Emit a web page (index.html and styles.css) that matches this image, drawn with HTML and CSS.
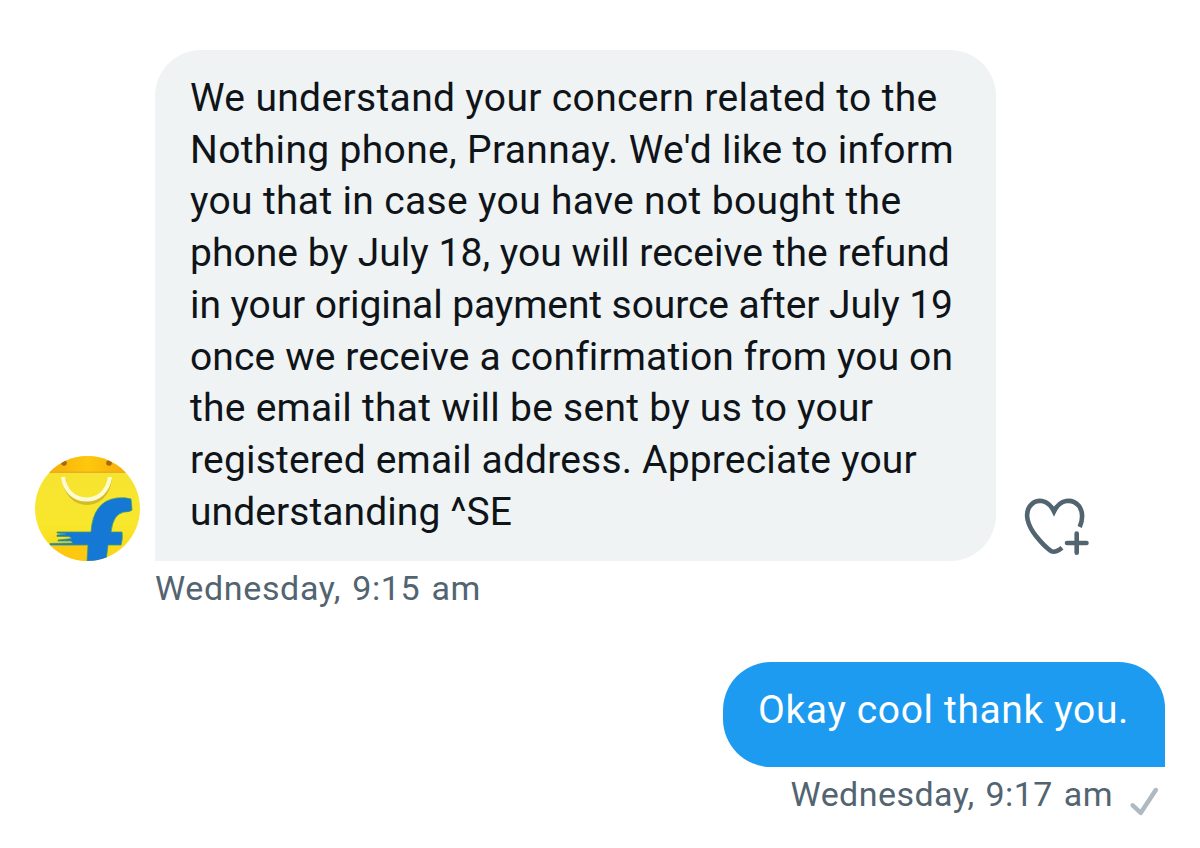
FILE: index.html
```
<!DOCTYPE html>
<html lang="en">
<head>
    <meta charset="UTF-8">
    <title>Messages</title>
    <link rel="stylesheet" href="styles.css">
</head>
<body>
<div class="message received">
    <div class="row">
        <svg class="avatar" viewBox="0 0 105 105">
            <defs>
                <clipPath id="circle"><circle cx="52.5" cy="52.5" r="52.5"/></clipPath>
                <linearGradient id="bag" x1="0" y1="0" x2="0" y2="1">
                    <stop offset="0" stop-color="#f5e232"/>
                    <stop offset="0.65" stop-color="#f8e72c"/>
                    <stop offset="1" stop-color="#fbd311"/>
                </linearGradient>
                <linearGradient id="top">
                    <stop offset="0" stop-color="#f5a40c"/>
                    <stop offset="0.5" stop-color="#fdc80e"/>
                    <stop offset="1" stop-color="#f5a40c"/>
                </linearGradient>
            </defs>
            <g clip-path="url(#circle)">
                <rect width="105" height="105" fill="url(#bag)"/>
                <rect width="105" height="16" fill="url(#top)"/>
                <rect y="15.5" width="105" height="1.5" fill="#e8b020"/>
                <path d="M15 88H54V105H15z" fill="#fdc910"/>
                <circle cx="29" cy="7" r="2.8" fill="#a8690c"/>
                <circle cx="74" cy="7" r="2.8" fill="#a8690c"/>
                <path d="M29 23C31 38 40 47 52 47S73 38 75 23" fill="none" stroke="#d3bb27" stroke-width="4"/>
                <path d="M28 21C30 35 39 43.500 51.500 43.500S73 35 75 21" fill="none" stroke="#fffbd0" stroke-width="4.200"/>
                <path class="letter" d="M96 43L97 54Q95 56 89 56Q78 58 76 76H87Q88 83 86 89H73L71 105H52L53 89H15V87.500L38 87L36 85H23V84L37 82.500L34 80.500H22V79L31 78L22 77V76H56Q58 45 82 42Q90 41 96 43z"/>
            </g>
        </svg>
        <div class="bubble">
            <span class="line l1">We understand your concern related to the</span>
            <span class="line l2">Nothing phone, Prannay. We'd like to inform</span>
            <span class="line l3">you that in case you have not bought the</span>
            <span class="line l4">phone by July 18, you will receive the refund</span>
            <span class="line l5">in your original payment source after July 19</span>
            <span class="line l6">once we receive a confirmation from you on</span>
            <span class="line l7">the email that will be sent by us to your</span>
            <span class="line l8">registered email address. Appreciate your</span>
            <span class="line l9">understanding ^SE</span>
        </div>
        <svg class="react" viewBox="0 0 74 66">
            <path d="M59.700 32C63 24 62.500 16 59 11C52 3 40 4 34 16.500C28 4 16 3 10 11C4 19 8 31 16 41C22 48.500 28 54 31 56Q33.500 57.500 36.500 56.200Q39.500 55 42 52.800"/>
            <path class="plus" d="M56.700 38.500V57.700M47 48H66.500"/>
        </svg>
    </div>
    <div class="time">Wednesday, 9:15 am</div>
</div>

<div class="message sent">
    <div class="bubble">Okay cool thank you.</div>
    <div class="time">
        Wednesday, 9:17 am
        <svg class="check" viewBox="0 0 32 32">
            <path d="M5.700 19.300L13.800 26.800L28.800 4"/>
        </svg>
    </div>
</div>
</body>
</html>
```
FILE: styles.css
```
* {
    box-sizing: border-box;
}

body {
    margin: 0;
    padding: 50px 35px 0;
    background: #fff;
    font-family: Roboto, "Liberation Sans", sans-serif;
    color: #0f1419;
}

.message {
    display: flex;
    flex-direction: column;
}

.row {
    display: flex;
    align-items: flex-end;
}

.avatar {
    width: 105px;
    height: 105px;
    margin-right: 15px;
}

.letter {
    fill: #1478d4;
    stroke: #3f9a72;
    stroke-width: 0.8;
}

.bubble {
    font-size: 39px;
    line-height: 51.7px;
    white-space: nowrap;
}

.received .bubble {
    width: 841px;
    height: 511px;
    padding: 23px 0 0 35px;
    border-radius: 46px 46px 46px 0;
    background: #eff3f4;
}

.line {
    display: block;
}

.l1 { letter-spacing: 0.34px; }
.l2 { letter-spacing: 0.33px; }
.l3 { letter-spacing: 0.34px; }
.l4 { letter-spacing: 0.04px; }
.l5 { letter-spacing: -0.09px; }
.l6 { letter-spacing: 0.13px; }
.l7 { letter-spacing: 0.27px; }
.l8 { letter-spacing: 0.18px; }
.l9 { letter-spacing: 0.07px; }

.react {
    width: 74px;
    height: 66px;
    margin-left: 24px;
    fill: none;
    stroke: #536471;
    stroke-width: 4.6;
}

.plus {
    stroke-linecap: round;
}

.time {
    font-size: 34px;
    line-height: 40px;
    color: #536471;
    letter-spacing: 0.65px;
    word-spacing: 2px;
}

.received .time {
    margin: 7px 0 0 120px;
}

.sent {
    align-items: flex-end;
    margin-top: 54px;
}

.sent .bubble {
    width: 442px;
    height: 105px;
    padding: 23px 0 0 35px;
    border-radius: 48px 46px 0 48px;
    background: #1d9bf0;
    color: #fff;
    letter-spacing: 0.63px;
}

.sent .time {
    display: flex;
    gap: 14px;
    margin-top: 7px;
    padding-right: 6px;
    letter-spacing: 0.45px;
}

.check {
    width: 32px;
    height: 32px;
    margin-top: 12px;
    fill: none;
    stroke: #aeb9c1;
    stroke-width: 4.5;
    stroke-linecap: round;
    stroke-linejoin: round;
}
```
